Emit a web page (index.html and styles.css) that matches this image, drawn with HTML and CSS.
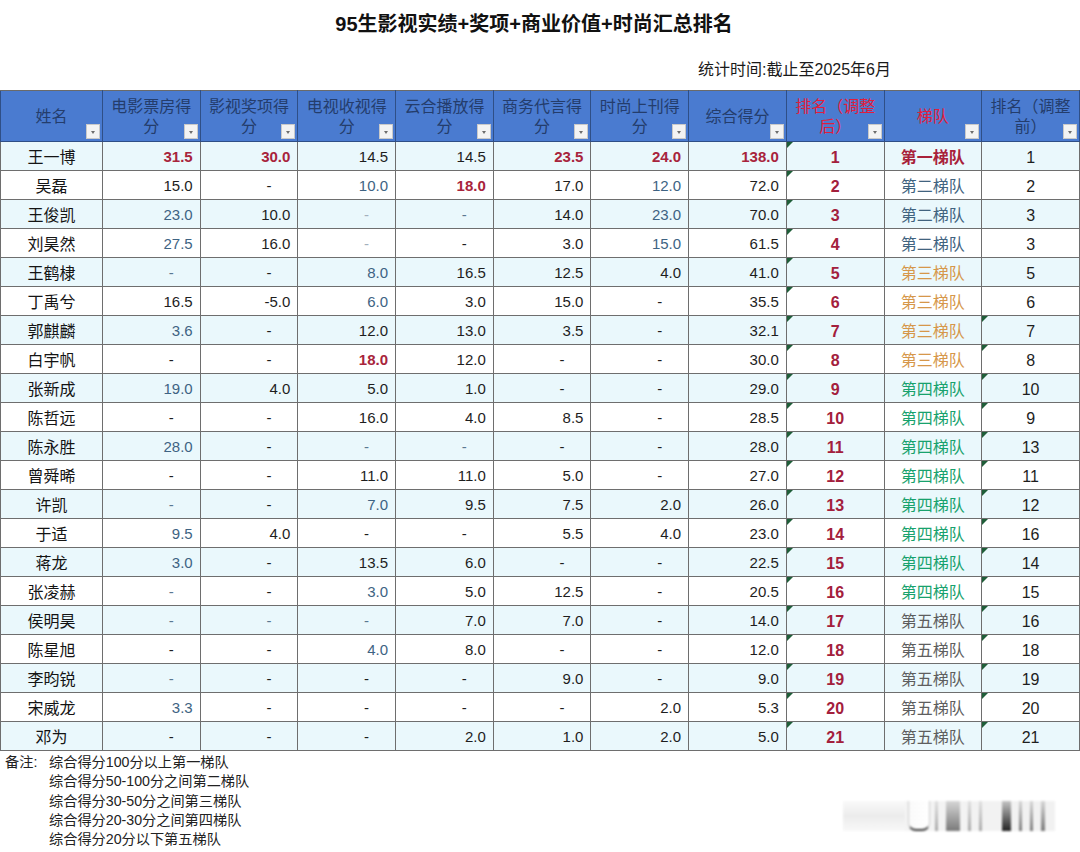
FILE: index.html
```html
<!DOCTYPE html>
<html lang="zh-CN">
<head>
<meta charset="utf-8">
<title>95生影视实绩+奖项+商业价值+时尚汇总排名</title>
<link rel="stylesheet" href="styles.css">
</head>
<body>
<div class="page">
  <h1 class="title">95生影视实绩+奖项+商业价值+时尚汇总排名</h1>
  <div class="stat"><span>统计时间:截止至2025年6月</span></div>
  <table class="grid">
    <colgroup><col class="c-name"><col span="10"></colgroup>
    <thead>
      <tr>
        <th>姓名<i class="dd"></i></th>
        <th>电影票房得<br>分<i class="dd"></i></th>
        <th>影视奖项得<br>分<i class="dd"></i></th>
        <th>电视收视得<br>分<i class="dd"></i></th>
        <th>云合播放得<br>分<i class="dd"></i></th>
        <th>商务代言得<br>分<i class="dd"></i></th>
        <th>时尚上刊得<br>分<i class="dd"></i></th>
        <th>综合得分<i class="dd"></i></th>
        <th class="red">排名（调整<br>后）<i class="dd"></i></th>
        <th class="red">梯队<i class="dd"></i></th>
        <th>排名（调整<br>前）<i class="dd"></i></th>
      </tr>
    </thead>
    <tbody>
      <tr><td class="nm">王一博</td><td class="r">31.5</td><td class="r">30.0</td><td>14.5</td><td>14.5</td><td class="r">23.5</td><td class="r">24.0</td><td class="r">138.0</td><td class="rk tri">1</td><td class="t1">第一梯队</td><td class="pv">1</td></tr>
      <tr><td class="nm">吴磊</td><td>15.0</td><td class="d">-</td><td class="b">10.0</td><td class="r">18.0</td><td>17.0</td><td class="b">12.0</td><td>72.0</td><td class="rk tri">2</td><td class="t2">第二梯队</td><td class="pv">2</td></tr>
      <tr><td class="nm">王俊凯</td><td class="b">23.0</td><td>10.0</td><td class="d dl">-</td><td class="d db">-</td><td>14.0</td><td class="b">23.0</td><td>70.0</td><td class="rk tri">3</td><td class="t2">第二梯队</td><td class="pv">3</td></tr>
      <tr><td class="nm">刘昊然</td><td class="b">27.5</td><td>16.0</td><td class="d dl">-</td><td class="d">-</td><td>3.0</td><td class="b">15.0</td><td>61.5</td><td class="rk tri">4</td><td class="t2">第二梯队</td><td class="pv">3</td></tr>
      <tr><td class="nm">王鹤棣</td><td class="d db">-</td><td class="d">-</td><td class="b">8.0</td><td>16.5</td><td>12.5</td><td>4.0</td><td>41.0</td><td class="rk tri">5</td><td class="t3">第三梯队</td><td class="pv">5</td></tr>
      <tr><td class="nm">丁禹兮</td><td>16.5</td><td>-5.0</td><td class="b">6.0</td><td>3.0</td><td>15.0</td><td class="d">-</td><td>35.5</td><td class="rk tri">6</td><td class="t3">第三梯队</td><td class="pv">6</td></tr>
      <tr><td class="nm">郭麒麟</td><td class="b">3.6</td><td class="d">-</td><td>12.0</td><td>13.0</td><td>3.5</td><td class="d">-</td><td>32.1</td><td class="rk tri">7</td><td class="t3">第三梯队</td><td class="pv tri">7</td></tr>
      <tr><td class="nm">白宇帆</td><td class="d">-</td><td class="d">-</td><td class="r">18.0</td><td>12.0</td><td class="d">-</td><td class="d">-</td><td>30.0</td><td class="rk tri">8</td><td class="t3">第三梯队</td><td class="pv tri">8</td></tr>
      <tr><td class="nm">张新成</td><td class="b">19.0</td><td>4.0</td><td>5.0</td><td>1.0</td><td class="d">-</td><td class="d">-</td><td>29.0</td><td class="rk tri">9</td><td class="t4">第四梯队</td><td class="pv tri">10</td></tr>
      <tr><td class="nm">陈哲远</td><td class="d">-</td><td class="d">-</td><td>16.0</td><td>4.0</td><td>8.5</td><td class="d">-</td><td>28.5</td><td class="rk tri">10</td><td class="t4">第四梯队</td><td class="pv tri">9</td></tr>
      <tr><td class="nm">陈永胜</td><td class="b">28.0</td><td class="d">-</td><td class="d db">-</td><td class="d db">-</td><td class="d">-</td><td class="d">-</td><td>28.0</td><td class="rk tri">11</td><td class="t4">第四梯队</td><td class="pv tri">13</td></tr>
      <tr><td class="nm">曾舜晞</td><td class="d">-</td><td class="d">-</td><td>11.0</td><td>11.0</td><td>5.0</td><td class="d">-</td><td>27.0</td><td class="rk tri">12</td><td class="t4">第四梯队</td><td class="pv tri">11</td></tr>
      <tr><td class="nm">许凯</td><td class="d db">-</td><td class="d">-</td><td class="b">7.0</td><td>9.5</td><td>7.5</td><td>2.0</td><td>26.0</td><td class="rk tri">13</td><td class="t4">第四梯队</td><td class="pv tri">12</td></tr>
      <tr><td class="nm">于适</td><td class="b">9.5</td><td>4.0</td><td class="d">-</td><td class="d">-</td><td>5.5</td><td>4.0</td><td>23.0</td><td class="rk tri">14</td><td class="t4">第四梯队</td><td class="pv tri">16</td></tr>
      <tr><td class="nm">蒋龙</td><td class="b">3.0</td><td class="d">-</td><td>13.5</td><td>6.0</td><td class="d">-</td><td class="d">-</td><td>22.5</td><td class="rk tri">15</td><td class="t4">第四梯队</td><td class="pv tri">14</td></tr>
      <tr><td class="nm">张凌赫</td><td class="d db">-</td><td class="d">-</td><td class="b">3.0</td><td>5.0</td><td>12.5</td><td class="d">-</td><td>20.5</td><td class="rk tri">16</td><td class="t4">第四梯队</td><td class="pv tri">15</td></tr>
      <tr><td class="nm">侯明昊</td><td class="d db">-</td><td class="d db">-</td><td class="d db">-</td><td>7.0</td><td>7.0</td><td class="d">-</td><td>14.0</td><td class="rk tri">17</td><td class="t5">第五梯队</td><td class="pv tri">16</td></tr>
      <tr><td class="nm">陈星旭</td><td class="d">-</td><td class="d">-</td><td class="b">4.0</td><td>8.0</td><td class="d">-</td><td class="d">-</td><td>12.0</td><td class="rk tri">18</td><td class="t5">第五梯队</td><td class="pv tri">18</td></tr>
      <tr><td class="nm">李昀锐</td><td class="d db">-</td><td class="d">-</td><td class="d">-</td><td class="d">-</td><td>9.0</td><td class="d">-</td><td>9.0</td><td class="rk tri">19</td><td class="t5">第五梯队</td><td class="pv tri">19</td></tr>
      <tr><td class="nm">宋威龙</td><td class="b">3.3</td><td class="d">-</td><td class="d">-</td><td class="d">-</td><td class="d">-</td><td>2.0</td><td>5.3</td><td class="rk tri">20</td><td class="t5">第五梯队</td><td class="pv tri">20</td></tr>
      <tr><td class="nm">邓为</td><td class="d">-</td><td class="d">-</td><td class="d">-</td><td>2.0</td><td>1.0</td><td>2.0</td><td>5.0</td><td class="rk tri">21</td><td class="t5">第五梯队</td><td class="pv tri">21</td></tr>
    </tbody>
  </table>
  <div class="foot">
    <div class="notes">
      <span class="note-label">备注:</span>
      <div class="note-lines">
        <div>综合得分100分以上第一梯队</div>
        <div>综合得分50-100分之间第二梯队</div>
        <div>综合得分30-50分之间第三梯队</div>
        <div>综合得分20-30分之间第四梯队</div>
        <div>综合得分20分以下第五梯队</div>
      </div>
    </div>
    <div class="wm" aria-hidden="true">
      <span class="wm-haze"></span>
      <span class="wm-u"></span>
      <span class="wm-bar w3 g1"></span>
      <span class="wm-bar w14 g2"></span>
      <span class="wm-bar w3 g1"></span>
      <span class="wm-bar w3 g1"></span>
      <span class="wm-bar w9 g3"></span>
      <span class="wm-bar w3 g2"></span>
      <span class="wm-bar w3 g2"></span>
      <span class="wm-bar w4 g2"></span>
    </div>
  </div>
</div>
</body>
</html>
```

FILE: styles.css
```css
html, body {
  margin: 0;
  padding: 0;
  background: #ffffff;
}

body {
  font-family: "Liberation Sans", "Noto Sans CJK SC", sans-serif;
  color: #1e1e1e;
}

.page {
  width: 1080px;
}

.title {
  margin: 0;
  height: 46px;
  line-height: 48px;
  text-align: center;
  padding-right: 12px;
  font-size: 20px;
  font-weight: bold;
  color: #111111;
}

.stat {
  height: 44px;
  display: flex;
  justify-content: flex-end;
  align-items: center;
  padding-right: 189px;
  font-size: 16px;
  color: #1a1a1a;
}

.grid {
  width: 1080px;
  border-collapse: collapse;
  table-layout: fixed;
}

.c-name {
  width: 102px;
}

.grid th {
  position: relative;
  height: 48px;
  padding: 2px 0 0 0;
  background: #4a7bd0;
  color: #243d6c;
  font-weight: normal;
  font-size: 16px;
  line-height: 20px;
  text-align: center;
  vertical-align: middle;
  border: 1px solid #2f4f86;
  border-top-color: #6a6a6a;
}

.grid th.red {
  color: #e11d3c;
}

.dd {
  position: absolute;
  right: 2px;
  bottom: 2px;
  width: 14px;
  height: 15px;
  background: #f3f3f3;
  border: 1px solid #c9c9c9;
  box-sizing: border-box;
}

.dd::after {
  content: "";
  position: absolute;
  left: 4px;
  top: 6px;
  border-left: 2.5px solid transparent;
  border-right: 2.5px solid transparent;
  border-top: 3px solid #6d6d6d;
}

.grid td {
  position: relative;
  height: 28px;
  padding: 0 7px 0 4px;
  font-size: 15px;
  text-align: right;
  vertical-align: middle;
  color: #1e1e1e;
  border: 1px solid #6e6e6e;
  background: #ffffff;
  white-space: nowrap;
}

.grid tbody tr:nth-child(odd) td {
  background: #eaf8fc;
}

.grid td.nm {
  text-align: center;
  padding: 0;
  font-size: 16px;
  color: #141414;
}

.grid td.r {
  color: #a8243c;
  font-weight: bold;
}

.grid td.b {
  color: #3e6383;
}

.grid td.d {
  padding-right: 26px;
}

.grid td.db {
  color: #5a7891;
}

.grid td.dl {
  color: #a3b0bc;
}

.grid td.rk,
.grid td.pv {
  text-align: center;
  height: 24px;
  padding: 4px 0 0 0;
  font-size: 16px;
}

.grid td.rk {
  font-weight: bold;
  color: #a3203c;
}

.grid td.pv {
  color: #1e1e1e;
}

.grid td.t1,
.grid td.t2,
.grid td.t3,
.grid td.t4,
.grid td.t5 {
  text-align: center;
  padding: 0;
  font-size: 16px;
}

.grid td.t1 { color: #a8213a; font-weight: bold; }
.grid td.t2 { color: #41637f; }
.grid td.t3 { color: #d6974a; }
.grid td.t4 { color: #18a26d; }
.grid td.t5 { color: #5e5e5e; }

.grid td.tri::before {
  content: "";
  position: absolute;
  left: 0;
  top: 0;
  border-top: 6px solid #1f5e39;
  border-right: 6px solid transparent;
}

.foot {
  display: flex;
  justify-content: space-between;
  align-items: flex-start;
}

.notes {
  display: flex;
  padding-left: 5px;
  padding-top: 2px;
  font-size: 14.2px;
  line-height: 19.3px;
  color: #222222;
}

.note-label {
  width: 44px;
  flex: none;
}

.wm {
  display: flex;
  align-items: stretch;
  height: 30px;
  margin-top: 50px;
  margin-right: 25px;
  padding: 0 2px;
  background: linear-gradient(to right, rgba(244,244,244,0) 0%, #f4f4f4 30%, #f1f1f1 100%);
  filter: blur(1px);
}

.wm-haze {
  width: 62px;
  background: linear-gradient(to bottom, #f9f9f9, #ececec 50%, #f8f8f8);
  margin-right: 3px;
}

.wm-u {
  width: 20px;
  margin-right: 5px;
  border: 1px solid #cccccc;
  border-top: none;
  border-bottom: 2px solid #3a3a3a;
  border-radius: 0 0 8px 8px;
  background: linear-gradient(to right, #fafafa, #ffffff);
}

.wm-bar {
  margin-right: 8px;
}

.w3 { width: 3px; }
.w4 { width: 4px; }
.w9 { width: 9px; margin-left: 12px; }
.w14 { width: 14px; }

.g1 { background: linear-gradient(to bottom, #e0e0e0, #a8a8a8); }
.g2 { background: linear-gradient(to bottom, #d6d6d6, #7a7a7a); }
.g3 { background: linear-gradient(to bottom, #c4c4c4, #222222); }
```
